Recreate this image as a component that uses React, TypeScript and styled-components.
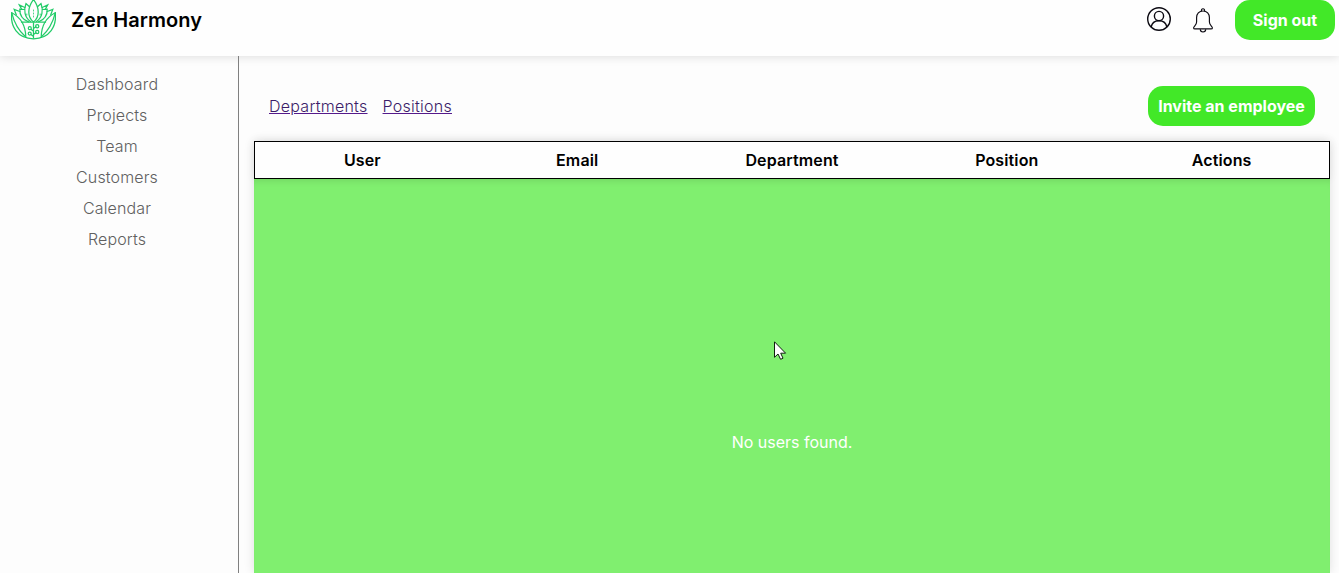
import React from "react";
import styled, { createGlobalStyle } from "styled-components";

const GlobalStyle = createGlobalStyle`
  * { box-sizing: border-box; }
  body {
    margin: 0;
    overflow: hidden;
    background: #fdfdfd;
    color: #000;
    font-family: Inter, "Liberation Sans", sans-serif;
    font-size: 16px;
  }
`;

const Page = styled.div`
  display: flex;
  flex-direction: column;
  height: 573px;
  overflow: hidden;
`;

const Header = styled.header`
  display: flex;
  justify-content: space-between;
  flex: none;
  height: 56px;
  padding: 0 4px 16px 11px;
  background: #fefefe;
  box-shadow: 0 0 10px rgba(0, 0, 0, 0.15);
`;

const Brand = styled.div`
  display: flex;
  align-items: center;
  gap: 15px;
`;

const BrandName = styled.span`
  font-size: 20px;
  font-weight: 600;
  line-height: 24px;
  letter-spacing: 0.05px;
`;

const HeaderActions = styled.div`
  display: flex;
  align-items: center;
`;

const IconButton = styled.span<{ $after: number }>`
  display: flex;
  margin-right: ${(p) => p.$after}px;
`;

const Button = styled.button<{ $width: number }>`
  width: ${(p) => p.$width}px;
  height: 40px;
  padding: 0;
  border: 0;
  border-radius: 15px;
  background: #42e828;
  color: #fff;
  font: inherit;
  font-weight: 700;
  white-space: nowrap;
`;

const Body = styled.div`
  display: flex;
  flex: 1;
  min-height: 0;
`;

const Sidebar = styled.nav`
  display: flex;
  flex-direction: column;
  align-items: center;
  gap: 12px;
  flex: none;
  width: 239px;
  padding: 19px 4px 0 0;
  border-right: 1px solid #808080;
`;

const NavLink = styled.a`
  color: #606060;
  font-weight: 300;
  line-height: 19px;
  letter-spacing: 0.13px;
`;

const Content = styled.main`
  display: flex;
  flex-direction: column;
  flex: 1;
  padding: 30px 9px 0 15px;
`;

const Toolbar = styled.div`
  display: flex;
  align-items: center;
  justify-content: space-between;
  height: 40px;
  margin-bottom: 15px;
  padding: 0 15px;
`;

const Links = styled.div`
  display: flex;
  gap: 15px;
`;

const TextLink = styled.a`
  color: #3b1c68;
  font-weight: 300;
  letter-spacing: 0.26px;
  text-decoration: underline;
  text-decoration-color: #551a8b;
`;

const Table = styled.section`
  display: flex;
  flex-direction: column;
  flex: 1;
  box-shadow: 0 0 10px rgba(0, 0, 0, 0.12);
`;

const TableHead = styled.div`
  display: grid;
  grid-template-columns: repeat(5, 1fr);
  align-items: center;
  flex: none;
  height: 38px;
  border: 1px solid #000;
  background: #fefefe;
  box-shadow: 0 0 10px rgba(0, 0, 0, 0.05);
  font-weight: 600;
  letter-spacing: 0.12px;
  text-align: center;
`;

const EmptyState = styled.div`
  display: flex;
  justify-content: center;
  flex: 1;
  padding-top: 253px;
  background: #80ef6f;
  color: #fff;
  line-height: 20px;
  box-shadow: inset 0 7px 7px -5px rgba(0, 0, 0, 0.1);
`;

const Cursor = styled.svg`
  position: absolute;
  left: 774px;
  top: 341px;
`;

const Logo = () => (
  <svg width="45" height="40" viewBox="0 0 45 40" fill="none" stroke="#22cb68" strokeWidth="1.25" strokeLinecap="round" strokeLinejoin="miter">
    <path d="M22.5 -.5C19.5 3.5 17.8 7.5 17.8 12C17.8 16.5 19.6 19.8 22.5 22C25.4 19.8 27.2 16.5 27.2 12C27.2 7.5 25.5 3.5 22.5 -.5Z" />
    <path d="M18.5 6.8L15 3.5C12.5 10 13.5 17.5 19.5 21.5M26.5 6.8L30 3.5C32.5 10 31.5 17.5 25.5 21.5" />
    <path d="M13.6 9.5L8.8 9.2C8.6 14.5 11.5 19.5 17.5 21.8M31.4 9.5L36.2 9.2C36.4 14.5 33.5 19.5 27.5 21.8" />
    <path d="M10.5 9L8.3 4.8L13.8 7.5M34.5 9L36.7 4.8L31.2 7.5" />
    <path d="M8.8 11.5L3.2 9.4L5.3 14.8M36.2 11.5L41.8 9.4L39.7 14.8" />
    <path d="M10.5 22.2H34.5" />
    <path d="M.7 12.8C-.8 26 6 38.6 22.5 38.8C39 38.6 45.8 26 44.3 12.8" />
    <path d="M.7 12.8C8 16.5 14.5 24 14.8 37M44.3 12.8C37 16.5 30.5 24 30.2 37" />
    <path d="M.7 12.8C3 22 6.5 29.5 14.3 36.5M44.3 12.8C42 22 38.5 29.5 30.7 36.5" />
    <path d="M22.5 10V18" strokeWidth=".8" strokeDasharray="1 2" />
    <path d="M15.8 14V15M29.2 14V15" strokeWidth=".9" />
    <path d="M22.5 23V38M22.5 28.5L25 26.8M22.5 31.3L20 29.3M22.5 34.5L25 32.8M22.5 36.5L20 34.5" />
    <circle cx="26.2" cy="26.2" r="1.6" />
    <circle cx="18.8" cy="28.2" r="1.5" />
    <circle cx="26.2" cy="31.9" r="1.6" />
    <circle cx="18.7" cy="33.5" r="1.5" />
  </svg>
);

const UserIcon = () => (
  <svg width="26" height="26" viewBox="0 0 26 26" fill="none" stroke="#0c0a12" strokeWidth="1.4">
    <circle cx="13" cy="12" r="11.3" />
    <circle cx="13" cy="9" r="4.6" />
    <path d="M5.2 20.2C5.8 16.2 8.8 13.7 13 13.7S20.2 16.2 20.8 20.2" />
  </svg>
);

const BellIcon = () => (
  <svg width="20" height="25" viewBox="0 0 20 25" fill="none" stroke="#0c0a12" strokeWidth="1.15" strokeLinejoin="round">
    <path d="M8.6 3.1A1.6 1.6 0 1 1 11.4 3.1" />
    <path d="M10 3C6 3 3.6 6 3.6 9.5V14C3.6 17.2 .6 18.5 .6 19.9Q.6 20.9 2 20.9H18Q19.4 20.9 19.4 19.9C19.4 18.5 16.4 17.2 16.4 14V9.5C16.4 6 14 3 10 3Z" />
    <path d="M7.3 21.3A2.7 2.7 0 0 0 12.7 21.3" />
  </svg>
);

const sections = ["Dashboard", "Projects", "Team", "Customers", "Calendar", "Reports"];
const columns = ["User", "Email", "Department", "Position", "Actions"];

export default function App() {
  return (
    <Page>
      <GlobalStyle />
      <Header>
        <Brand>
          <Logo />
          <BrandName>Zen Harmony</BrandName>
        </Brand>
        <HeaderActions>
          <IconButton $after={21}><UserIcon /></IconButton>
          <IconButton $after={22}><BellIcon /></IconButton>
          <Button $width={100}>Sign out</Button>
        </HeaderActions>
      </Header>
      <Body>
        <Sidebar>
          {sections.map((name) => <NavLink key={name}>{name}</NavLink>)}
        </Sidebar>
        <Content>
          <Toolbar>
            <Links>
              <TextLink>Departments</TextLink>
              <TextLink>Positions</TextLink>
            </Links>
            <Button $width={167}>Invite an employee</Button>
          </Toolbar>
          <Table>
            <TableHead>
              {columns.map((name) => <span key={name}>{name}</span>)}
            </TableHead>
            <EmptyState>No users found.</EmptyState>
          </Table>
        </Content>
      </Body>
      <Cursor width="13" height="20" viewBox="0 0 13 20">
        <path d="M.5 .8V16.3L4 13L6.6 18.3L9 17.2L6.7 12.2H11.6Z" fill="#fff" stroke="#102010" strokeWidth="1" />
      </Cursor>
    </Page>
  );
}
